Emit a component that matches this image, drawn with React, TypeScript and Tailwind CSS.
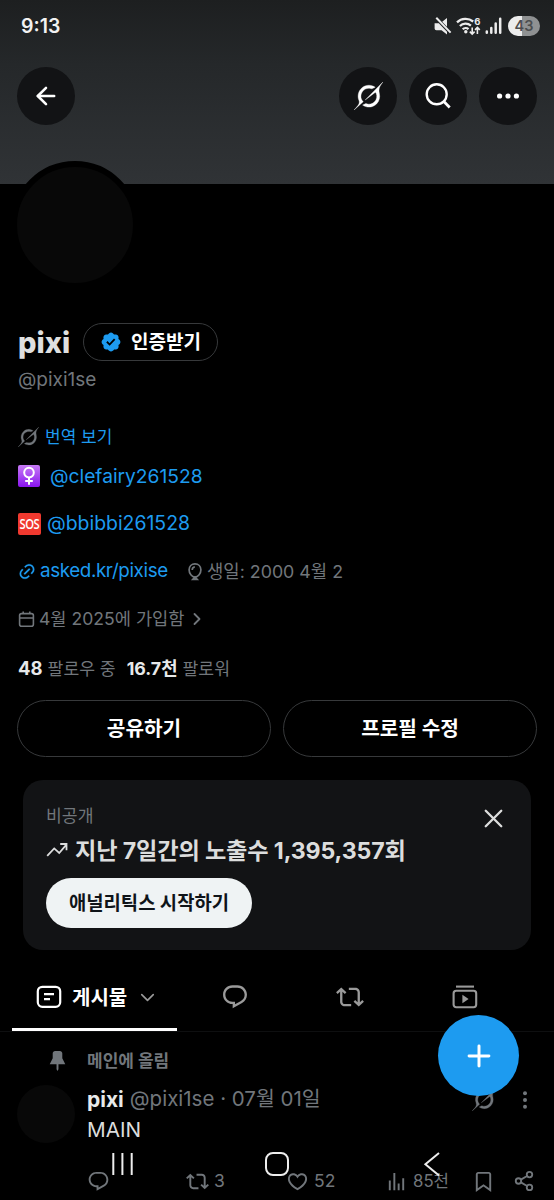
import type { ReactNode } from 'react';
import { ArrowLeft, ChevronDown, ChevronRight, Plus, Share2, X } from 'lucide-react';

const PATHS = {
  reply:
    'M1.751 10c0-4.42 3.584-8 8.005-8h4.366c4.49 0 8.129 3.64 8.129 8.13 0 2.96-1.607 5.68-4.196 7.11l-8.054 4.46v-3.69h-.067c-4.49.1-8.183-3.51-8.183-8.01zm8.005-6c-3.317 0-6.005 2.69-6.005 6 0 3.37 2.77 6.08 6.138 6.01l.351-.01h1.761v2.3l5.087-2.81c1.951-1.08 3.163-3.13 3.163-5.36 0-3.39-2.744-6.13-6.129-6.13H9.756z',
  repost:
    'M4.5 3.88l4.432 4.14-1.364 1.46L5.5 7.55V16c0 1.1.896 2 2 2H13v2H7.5c-2.209 0-4-1.79-4-4V7.55L1.432 9.48.068 8.02 4.5 3.88zM16.5 6H11V4h5.5c2.209 0 4 1.79 4 4v8.45l2.068-1.93 1.364 1.46-4.432 4.14-4.432-4.14 1.364-1.46 2.068 1.93V8c0-1.1-.896-2-2-2z',
  heart:
    'M16.697 5.5c-1.222-.06-2.679.51-3.89 2.16l-.805 1.09-.806-1.09C9.984 6.01 8.526 5.44 7.304 5.5c-1.243.07-2.349.78-2.91 1.91-.552 1.12-.633 2.78.479 4.82 1.074 1.97 3.257 4.27 7.129 6.61 3.87-2.34 6.052-4.64 7.126-6.61 1.111-2.04 1.03-3.7.477-4.82-.561-1.13-1.666-1.84-2.908-1.91zm4.187 7.69c-1.351 2.48-4.001 5.12-8.379 7.67l-.503.3-.504-.3c-4.379-2.55-7.029-5.19-8.382-7.67-1.36-2.5-1.41-4.86-.514-6.67.887-1.79 2.647-2.91 4.601-3.01 1.651-.09 3.368.56 4.798 2.01 1.429-1.45 3.146-2.1 4.796-2.01 1.954.1 3.714 1.22 4.601 3.01.896 1.81.846 4.17-.514 6.67z',
  views:
    'M8.75 21V3h2v18h-2zM18 21V8.5h2V21h-2zM4 21l.004-10h2L6 21H4zm9.248 0v-7h2v7h-2z',
  bookmark:
    'M4 4.5C4 3.12 5.119 2 6.5 2h11C18.881 2 20 3.12 20 4.5v18.44l-8-5.71-8 5.71V4.5zM6.5 4c-.276 0-.5.22-.5.5v14.56l6-4.29 6 4.29V4.5c0-.28-.224-.5-.5-.5h-11z',
  pin: 'M7 4.5C7 3.12 8.12 2 9.5 2h5C15.88 2 17 3.12 17 4.5v5.26L20.12 16H13v5l-1 2-1-2v-5H3.88L7 9.76V4.5z',
};

const Icon = ({ name, className }: { name: keyof typeof PATHS; className: string }) => (
  <svg viewBox="0 0 24 24" fill="currentColor" className={`shrink-0 ${className}`}>
    <path d={PATHS[name]} />
  </svg>
);

const Grok = ({ className }: { className: string }) => (
  <svg viewBox="0 0 33 32" fill="currentColor" stroke="currentColor" strokeWidth="0.4" className={`shrink-0 ${className}`}>
    <path d="M12.745 20.54l10.97-8.19c.539-.4 1.307-.244 1.564.38 1.349 3.288.746 7.241-1.938 9.955-2.683 2.714-6.417 3.31-9.83 1.954l-3.728 1.745c5.347 3.697 11.84 2.782 15.898-1.324 3.219-3.255 4.216-7.692 3.284-11.693l.008.009c-1.351-5.878.332-8.227 3.782-13.031L33 0l-4.54 4.59v-.014L12.743 20.544m-2.263 1.987c-3.837-3.707-3.175-9.446.1-12.755 2.42-2.449 6.388-3.448 9.852-1.979l3.72-1.737c-.67-.49-1.53-1.017-2.515-1.387-4.455-1.854-9.789-.931-13.41 2.728-3.483 3.523-4.579 8.94-2.697 13.561 1.405 3.454-.899 5.898-3.22 8.364C1.49 30.2.666 31.074 0 32l10.478-9.466" />
  </svg>
);

const Verified = () => (
  <svg viewBox="0 0 22 22" className="h-[22px] w-[22px] shrink-0 fill-[#1d9bf0]">
    <path d="M20.396 11c-.018-.646-.215-1.275-.57-1.816-.354-.54-.852-.972-1.438-1.246.223-.607.27-1.264.14-1.897-.131-.634-.437-1.218-.882-1.687-.47-.445-1.053-.75-1.687-.882-.633-.13-1.29-.083-1.897.14-.273-.587-.704-1.086-1.245-1.44S11.647 1.62 11 1.604c-.646.017-1.273.213-1.813.568s-.969.854-1.24 1.44c-.608-.223-1.267-.272-1.902-.14-.635.13-1.22.436-1.69.882-.445.47-.749 1.055-.878 1.688-.13.633-.08 1.29.144 1.896-.587.274-1.087.705-1.443 1.245-.356.54-.555 1.17-.574 1.817.02.647.218 1.276.574 1.817.356.54.856.972 1.443 1.245-.224.606-.274 1.263-.144 1.896.13.634.433 1.218.877 1.688.47.443 1.054.747 1.687.878.633.132 1.29.084 1.897-.136.274.586.705 1.084 1.246 1.439.54.354 1.17.551 1.816.569.647-.016 1.276-.213 1.817-.567s.972-.854 1.245-1.44c.604.239 1.266.296 1.903.164.636-.132 1.22-.447 1.68-.907.46-.46.776-1.044.908-1.681s.075-1.299-.165-1.903c.586-.274 1.084-.705 1.439-1.246.354-.54.551-1.17.569-1.816zM9.662 14.85l-3.429-3.428 1.293-1.302 2.072 2.072 4.4-4.794 1.347 1.246z" />
  </svg>
);

const RoundButton = ({ children }: { children: ReactNode }) => (
  <button className="flex h-[58px] w-[58px] shrink-0 items-center justify-center rounded-full bg-[#121315] text-white">
    {children}
  </button>
);

const StatusBar = () => (
  <div className="flex h-[52px] items-center justify-between pl-[21px] pr-[14px]">
    <span className="pt-0.5 text-[19.5px] font-semibold text-[#f2f2f2]">9:13</span>
    <div className="flex items-center text-[#ececec]">
      {/* muted speaker */}
      <svg viewBox="0 0 18 18" className="h-[18px] w-[18px]" fill="currentColor">
        <path d="M.6 6.2h4.2L13 14.8v2.6L7.5 13.2H2.4Q.6 13.2.6 11.4zM8.2 4.8 13 1v8.8z" />
        <path d="M2.3.8 16.6 15.6" stroke="currentColor" strokeWidth="2" />
      </svg>
      {/* wifi 6 with traffic arrows */}
      <svg viewBox="0 -4 25 26" className="ml-1 h-[26px] w-[25px]" fill="none" stroke="currentColor" strokeWidth="2.3">
        <path d="M1 5.3a12.6 12.6 0 0 1 16.2-.8M3.9 9a8.2 8.2 0 0 1 11-.4M6.7 12.3a4.3 4.3 0 0 1 5.8-.2" />
        <circle cx="9.8" cy="14.8" r="1.7" fill="currentColor" stroke="none" />
        <path d="M16.2 10.5v6.5M13.8 14.6l2.4 2.4 2.4-2.4M21.4 17v-6.5M19 12.9l2.4-2.4 2.4 2.4" strokeWidth="1.6" />
        <text x="18.2" y="7.8" fontSize="9.5" fontWeight="700" fill="currentColor" stroke="none">6</text>
      </svg>
      <svg viewBox="0 0 17 18" className="ml-1 h-[18px] w-[17px]" fill="none" stroke="currentColor" strokeWidth="2.5" strokeLinecap="round">
        <path d="M1.8 14.4v1.4M6.3 11v4.8M10.7 6.6v9.2M15.2 1.8v14" />
      </svg>
      <div className="ml-[6px] flex h-5 w-8 items-center justify-center rounded-full bg-[linear-gradient(90deg,#ececec_44%,#8f9192_44%)]">
        <span className="text-[14.5px] font-semibold leading-none text-[#4b4d4f]">43</span>
      </div>
    </div>
  </div>
);

const Header = () => (
  <header className="h-[184px] bg-[linear-gradient(180deg,#1d1f20_0%,#25282a_35%,#303336_100%)]">
    <StatusBar />
    <div className="flex gap-3 pl-[17px] pr-[17px] pt-[15px]">
      <RoundButton>
        <ArrowLeft className="h-7 w-7" strokeWidth={2.2} />
      </RoundButton>
      <div className="flex-1" />
      <RoundButton>
        <Grok className="h-[28px] w-[29px]" />
      </RoundButton>
      <RoundButton>
        <svg viewBox="0 0 26 26" className="mb-px mr-px h-[26px] w-[26px]" fill="none" stroke="currentColor" strokeWidth="2.4">
          <circle cx="11.7" cy="11.3" r="10" />
          <path d="m18.6 18.2 6.1 6.2" strokeWidth="2.8" />
        </svg>
      </RoundButton>
      <RoundButton>
        <svg viewBox="0 0 24 24" className="h-6 w-6" fill="currentColor">
          <circle cx="3.6" cy="12" r="2.6" />
          <circle cx="12" cy="12" r="2.6" />
          <circle cx="20.4" cy="12" r="2.6" />
        </svg>
      </RoundButton>
    </div>
  </header>
);

const Bio = () => (
  <section className="px-[18px] text-[#71767b]">
    <div className="flex h-[38px] items-center">
      <h1 className="w-[65px] text-[29px] font-extrabold leading-none text-[#e0e0e0]">pixi</h1>
      <button className="flex h-[38px] w-[135px] items-center justify-center gap-[9px] rounded-full border border-[#37393b] text-[19px] font-bold text-white">
        <Verified />
        <span className="pt-[2px]">인증받기</span>
      </button>
    </div>
    <div className="flex h-[38px] items-center text-[19px]">@pixi1se</div>

    <div className="mt-[21px] flex h-9 items-center gap-[6px]">
      <Grok className="mb-[2px] h-[20px] w-[21px]" />
      <span className="text-[17px] text-[#1d9bf0]">번역 보기</span>
    </div>
    <div className="mt-[2px] flex h-9 items-center text-[19.2px] text-[#1d9bf0]">
      <div className="mr-[10px] flex h-[22px] w-[22px] items-center justify-center rounded-[2px] bg-[linear-gradient(180deg,#c77bf5,#8a14ef)]">
        <svg viewBox="0 0 22 22" className="h-[22px] w-[22px]" fill="none" stroke="#fff" strokeWidth="2">
          <circle cx="11" cy="7.6" r="4.8" />
          <path d="M11 12.4v7.4M7.2 16h7.6" />
        </svg>
      </div>
      @clefairy261528
    </div>
    <div className="mt-3 flex h-9 items-center text-[19.4px] text-[#1d9bf0]">
      <div className="mr-[6px] flex h-[22px] w-[23px] items-center justify-center rounded-[2px] bg-[#f0392f]">
        <span className="scale-x-[.8] font-['Open_Sans','Noto_Sans',sans-serif] text-[14px] font-semibold leading-none tracking-[-0.6px] text-white">SOS</span>
      </div>
      @bbibbi261528
    </div>
    <div className="mt-[11px] flex h-9 items-center">
      <svg viewBox="0 0 24 24" className="h-[19px] w-[18px] text-[#1d9bf0]" fill="currentColor" stroke="currentColor" strokeWidth="0.3">
        <path d="M18.36 5.64c-1.95-1.96-5.11-1.96-7.07 0L9.88 7.05 8.46 5.64l1.42-1.42c2.73-2.73 7.16-2.73 9.9 0 2.73 2.74 2.73 7.17 0 9.9l-1.42 1.42-1.41-1.42 1.41-1.41c1.96-1.96 1.96-5.12 0-7.07zm-2.12 3.53l-7.07 7.07-1.41-1.41 7.07-7.07 1.41 1.41zm-12.02.71l1.42-1.42 1.41 1.42-1.41 1.41c-1.96 1.96-1.96 5.12 0 7.07 1.95 1.96 5.11 1.96 7.07 0l1.41-1.41 1.42 1.41-1.42 1.42c-2.73 2.73-7.16 2.73-9.9 0-2.73-2.74-2.73-7.17 0-9.9z" />
      </svg>
      <span className="ml-[4px] w-[147px] text-[18.8px] tracking-[-0.38px] text-[#1d9bf0]">asked.kr/pixise</span>
      <svg viewBox="0 0 16 19" className="h-[19px] w-4" fill="none" stroke="currentColor" strokeWidth="1.7">
        <path d="M8 1.8c3.4 0 5.9 2.5 5.9 6 0 3.7-2.7 7.2-5.9 7.2s-5.9-3.5-5.9-7.2c0-3.5 2.5-6 5.9-6zM5.2 8c0-1.8 1-3 2.6-3.2M5.8 17.4h4.4L8 15z" />
      </svg>
      <span className="ml-1 pt-[2px] text-[17.8px]">생일: 2000 4월 2</span>
    </div>
    <div className="mt-3 flex h-9 items-center">
      <svg viewBox="0 0 17 17" className="h-[17px] w-[17px]" fill="none" stroke="currentColor" strokeWidth="1.6">
        <rect x="1.6" y="2.6" width="13.8" height="12.6" rx="2" />
        <path d="M1.6 7h13.8M5.2.6v2M11.8.6v2" />
      </svg>
      <span className="ml-[4px] pt-px text-[17.6px]">4월 2025에 가입함</span>
      <ChevronRight className="ml-[3px] h-5 w-5" strokeWidth={2.2} />
    </div>
    <div className="mt-[14px] flex h-9 items-center text-[17.2px]">
      <b className="text-[18.5px] text-[#e7e9ea]">48</b>
      <span className="ml-[5px]">팔로우 중</span>
      <b className="ml-[11px] text-[17.8px] text-[#e7e9ea]">16.7천</b>
      <span className="ml-[5px]">팔로워</span>
    </div>
  </section>
);

const AnalyticsCard = () => (
  <section className="mx-[23px] mt-[23px] h-[170px] rounded-[20px] bg-[#121315] pl-[23px] pr-[28px] pt-[23px]">
    <div className="flex h-[26px] items-center justify-between">
      <span className="text-[17.2px] text-[#71767b]">비공개</span>
      <X className="-mr-[6px] mt-[4px] h-[31px] w-[31px] text-[#dcdddd]" strokeWidth={1.8} />
    </div>
    <div className="mt-[5px] flex h-8 items-center text-[#dcdddd]">
      <svg viewBox="0 0 22 16" className="h-4 w-[22px]" fill="none" stroke="currentColor" strokeWidth="1.8">
        <path d="m1.2 13.8 7-7.4 5 4.6 7-8.2M14.2 2h6.3v6.2" />
      </svg>
      <span className="ml-[7px] pt-[2px] text-[23.2px] font-bold tracking-[-0.15px]">지난 7일간의 노출수 1,395,357회</span>
    </div>
    <button className="mt-3 flex h-[50px] w-[206px] items-center justify-center rounded-full bg-[#eff3f4] pt-[2px] text-[18.8px] font-bold text-[#0f1419]">
      애널리틱스 시작하기
    </button>
  </section>
);

const Tabs = () => (
  <nav className="mt-[12px] flex h-[70px] border-b border-[#0e0f10] pl-3 text-[#9a9a9a]">
    <div className="flex w-[165px] items-center border-b-[3px] border-white pl-6 pt-[3px] text-white">
      <svg viewBox="0 0 26 24" className="h-6 w-[26px]" fill="none" stroke="currentColor" strokeWidth="2.2">
        <rect x="1.8" y="1.8" width="22.4" height="20" rx="4.5" />
        <path d="M8 9.2h10M8 14.2h6" />
      </svg>
      <span className="ml-[10px] pt-[2px] text-[20px] font-bold">게시물</span>
      <ChevronDown className="ml-[9px] mt-px h-[23px] w-[23px] text-[#9a9a9a]" strokeWidth={1.7} />
    </div>
    <div className="flex w-[115px] items-center justify-center">
      <Icon name="reply" className="h-7 w-7" />
    </div>
    <div className="flex w-[116px] items-center justify-center">
      <Icon name="repost" className="h-7 w-7" />
    </div>
    <div className="flex w-[114px] items-center justify-center">
      <svg viewBox="0 0 26 24" className="h-6 w-[26px]" fill="none" stroke="currentColor" strokeWidth="2.1">
        <rect x="1.6" y="5.8" width="22.6" height="16.4" rx="2.6" />
        <path d="M4 1.6h18" />
        <path d="m10.4 9.8 6.2 4.2-6.2 4.2z" fill="currentColor" stroke="none" />
      </svg>
    </div>
  </nav>
);

const Post = () => (
  <article className="text-[#71767b]">
    <div className="mt-[10px] flex h-9 items-center pl-[46px]">
      <Icon name="pin" className="h-[23px] w-[23px]" />
      <span className="ml-[18px] pt-[3px] text-[17px] font-bold">메인에 올림</span>
    </div>
    <div className="flex pl-[17px] pr-[16px] pt-[7px]">
      <div className="h-[58px] w-[58px] shrink-0 rounded-full bg-[#080808]" />
      <div className="ml-3 min-w-0 flex-1">
        <div className="flex h-7 items-center whitespace-nowrap pt-px text-[20.5px]">
          <b className="text-[21px] text-[#e7e9ea]">pixi</b>
          <span className="ml-[6px]">@pixi1se · 07월 01일</span>
          <div className="flex-1" />
          <Grok className="mr-[25px] h-[23px] w-[24px]" />
          <svg viewBox="0 0 8 20" className="mr-[9px] h-5 w-2" fill="currentColor">
            <circle cx="4" cy="3.2" r="2" />
            <circle cx="4" cy="10" r="2" />
            <circle cx="4" cy="16.8" r="2" />
          </svg>
        </div>
        <div className="mt-[2px] flex h-[30px] items-center text-[20.7px] text-[#dcdddd]">MAIN</div>
        <div className="mt-[22px] flex h-7 items-center text-[17.5px]">
          <Icon name="reply" className="h-[23px] w-[23px]" />
          <div className="ml-[76px] flex w-[100px] items-center gap-[5px]">
            <Icon name="repost" className="h-[23px] w-[23px]" />3
          </div>
          <div className="flex w-[99px] items-center gap-[5px]">
            <Icon name="heart" className="h-[23px] w-[23px]" />52
          </div>
          <div className="flex w-[87px] items-center gap-[5px] text-[16.8px]">
            <Icon name="views" className="h-[23px] w-[23px]" />
            <span className="pt-px">85천</span>
          </div>
          <Icon name="bookmark" className="h-[23px] w-[23px]" />
          <Share2 className="ml-[18px] h-[22px] w-[22px] shrink-0" strokeWidth={2} />
        </div>
      </div>
    </div>
  </article>
);

// Android three-button bar, drawn over the feed
const SystemNav = () => (
  <div className="absolute bottom-[22px] left-0 flex h-7 w-full items-center pl-[110px] text-[#ededed]">
    <svg viewBox="0 0 24 24" className="h-6 w-6" fill="none" stroke="currentColor" strokeWidth="2">
      <path d="M3.3 1v22M12.4 1v22M21.7 1v22" />
    </svg>
    <svg viewBox="0 0 26 26" className="ml-[130px] h-[26px] w-[26px]" fill="none" stroke="currentColor" strokeWidth="2">
      <rect x="2" y="2" width="22" height="22" rx="7" />
    </svg>
    <svg viewBox="0 0 18 26" className="ml-[133px] h-[26px] w-[18px]" fill="none" stroke="currentColor" strokeWidth="2">
      <path d="M16 2 2.4 13.2 16 24.4" />
    </svg>
  </div>
);

function App() {
  return (
    <div className="relative h-[1200px] w-[554px] overflow-hidden whitespace-nowrap bg-black font-['Inter','Noto_Sans_CJK_KR',sans-serif]">
      <Header />
      <div className="h-[139px]">
        <div className="relative -top-[23px] ml-[11px] h-32 w-32 rounded-full border-[6px] border-black bg-[#080808]" />
      </div>
      <Bio />
      <div className="mt-[13px] flex gap-3 px-[17px] text-[20.2px] font-bold text-white">
        <button className="h-[57px] flex-1 rounded-full border border-[#37393b] pt-0.5">공유하기</button>
        <button className="h-[57px] flex-1 rounded-full border border-[#37393b] pt-0.5">프로필 수정</button>
      </div>
      <AnalyticsCard />
      <Tabs />
      <Post />
      <button className="absolute left-[438px] top-[1015px] flex h-[81px] w-[81px] items-center justify-center rounded-full bg-[#1d9bf0] text-white">
        <Plus className="h-[34px] w-[34px]" strokeWidth={2.1} />
      </button>
      <SystemNav />
    </div>
  );
}

export default App;
